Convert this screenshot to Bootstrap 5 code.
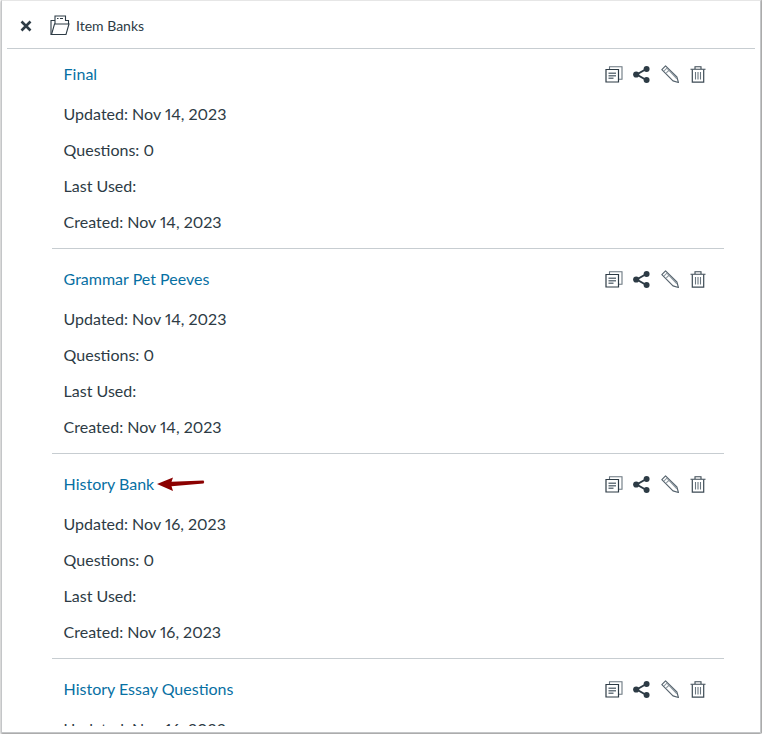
<!DOCTYPE html>
<html lang="en"><head><meta charset="utf-8"><title>Item Banks</title>
<link href="https://cdn.jsdelivr.net/npm/bootstrap@5.3.0/dist/css/bootstrap.min.css" rel="stylesheet">
<style>
html,body{height:100%;margin:0;background:#fff;overflow:hidden}
body{font-family:Lato,sans-serif;font-size:16px;color:#2d3b45;font-variant-numeric:proportional-nums;font-feature-settings:"pnum" 1}
.frame{width:760px;height:733px;margin-left:1px;background:#fff;border:1px solid #c4c6c8;border-top-color:#e6e6e6;box-shadow:0 1px 2px #8a8a8a,1px 0 1px #bbb;overflow:hidden}
.topbar{height:48px;margin-left:5px;margin-right:5px;border-bottom:1px solid #c7cdd1;padding-left:12px;padding-top:2px}
.topbar .tt{font-size:14px;margin-left:6px;color:#2d3b45}
.xbtn{width:14px;margin-right:17px}
.scroller{height:677px;overflow:hidden}
.bank{margin-left:50px;margin-right:36px;border-bottom:1px solid #c7cdd1;padding:18px 12px 0 11.6px;height:205px}
.bank.firstb{height:200px;padding-top:13px}
.bank:last-child{border-bottom:0}
.ttl{color:#0770a3;text-decoration:none;line-height:24px}
.ln{line-height:24px;margin-bottom:12px}
.ln.l1{margin-top:16px}
.tools{gap:8px;margin-right:6px}
.tools svg{display:block}
.tools .nudge{margin-left:2px}
.tools .nudgepen{margin-left:3px}
.tools .nudgebin{margin-left:3px}
.arrowmark{margin-left:3px}
</style></head><body>
<div class="frame">
 <div class="topbar d-flex align-items-center">
  <svg class="xbtn" width="14" height="14" viewBox="0 0 14 14"><path d="M2.5 2.5l9 9M11.5 2.5l-9 9" stroke="#2d3b45" stroke-width="2.6" fill="none"/></svg>
  <svg width="20" height="21" viewBox="0 0 20 21" fill="none" stroke="#2d3b45" stroke-width="1.1"><path d="M3.500 19.500H1V5.500H5M5 9V1H15.500V5.500H18.500V9"/><path d="M4.500 9H19L16 19.500H1.500Z"/><path d="M7 3.500h1.500M10 3.500h3" stroke-width="1.200"/></svg>
  <span class="tt">Item Banks</span>
 </div>
 <div class="scroller" id="list"></div>
</div>
<svg width="0" height="0" class="position-absolute"><defs>
 <symbol id="i-copy" viewBox="0 0 18 17"><path d="M4.500 3V.8H17v12.400H14" fill="none" stroke="#6b7780" stroke-width="1.100"/><path d="M1 3.500H13.500V16H1z" fill="#fff" stroke="#2d3b45" stroke-width="1.200"/><path d="M3.500 6.500h7.500v1.500H3.500zM3.500 9h7.500v1.500H3.500zM3.500 11.500h5v1.500h-5z" fill="#6b7780"/></symbol>
 <symbol id="i-share" viewBox="0 0 16 16"><path d="M12.500 2.800L3.500 8l9 5.200" fill="none" stroke="#2d3b45" stroke-width="1.800"/><circle cx="12.800" cy="2.800" r="2.800" fill="#2d3b45"/><circle cx="3" cy="8" r="2.900" fill="#2d3b45"/><circle cx="12.800" cy="13.200" r="2.800" fill="#2d3b45"/></symbol>
 <symbol id="i-pencil" viewBox="0 0 17 17"><path d="M.8 4.300L4.300 .8L15 11.300L16.500 16.500L11.300 15Z" fill="#fff" stroke="#56636d" stroke-width="1.100" stroke-linejoin="round"/><path d="M3 5.500L5.500 3L14.500 12M5 7.500L7.500 5L15 13" fill="none" stroke="#8a959d" stroke-width="1"/></symbol>
 <symbol id="i-trash" viewBox="0 0 16 17"><path d="M.5 3.200H15.500M5 3V.8H11V3" fill="none" stroke="#3c4a54" stroke-width="1.100"/><path d="M2.300 3.500V16.200H13.700V3.500" fill="none" stroke="#3c4a54" stroke-width="1.200"/><path d="M5.500 6V13.500M8 6V13.500M10.500 6V13.500" stroke="#6b7780" stroke-width="1.100"/></symbol>
</defs></svg>
<script>
const data=[["Final","Nov 14, 2023"],["Grammar Pet Peeves","Nov 14, 2023"],["History Bank","Nov 16, 2023"],["History Essay Questions","Nov 16, 2023"]];
const arrow='<svg class="arrowmark" width="48" height="16" viewBox="0 0 48 16"><path d="M0 8L16 1.500L14.500 5.800L46.500 4.500Q48 6 46.500 7.600L14.500 10.200L16 15Z" fill="#8b0000"/></svg>';
document.getElementById('list').innerHTML=data.map((d,i)=>`<div class="bank${i==0?' firstb':''}">
 <div class="d-flex justify-content-between align-items-center">
  <div class="d-flex align-items-center"><a href="#" class="ttl">${d[0]}</a>${i==2?arrow:''}</div>
  <div class="tools d-flex align-items-center">
   <svg width="18" height="17"><use href="#i-copy"/></svg><svg width="17" height="17" class="nudge"><use href="#i-share"/></svg><svg width="18" height="18" class="nudgepen"><use href="#i-pencil"/></svg><svg width="16" height="17" class="nudgebin"><use href="#i-trash"/></svg>
  </div>
 </div>
 <div class="ln l1">Updated: ${d[1]}</div><div class="ln">Questions: 0</div><div class="ln">Last Used:</div><div class="ln">Created: ${d[1]}</div>
</div>`).join('');
</script>
<script src="https://cdn.jsdelivr.net/npm/bootstrap@5.3.0/dist/js/bootstrap.bundle.min.js"></script>
</body></html>
